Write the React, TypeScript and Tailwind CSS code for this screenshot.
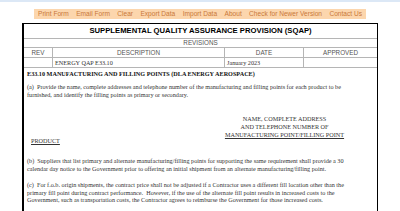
const menu = ['Print Form', 'Email Form', 'Clear', 'Export Data', 'Import Data', 'About', 'Check for Newer Version', 'Contact Us']

const serif = "font-['Liberation_Serif',serif]"

export default function App() {
  return (
    <div className="w-[400px] h-[211px] overflow-hidden bg-white font-['Liberation_Sans',Arial,sans-serif]">
      <div className="h-[2px] bg-[#dce8f6]" />
      <div className="ml-[34px] mt-[7px] w-[332px] h-[10px] bg-[#fcd6ad] flex items-center gap-[7.4px] px-[4px] text-[6.6px] text-[#c9783a] leading-none whitespace-nowrap">
        {menu.map((m) => (
          <span key={m}>{m}</span>
        ))}
      </div>
      <div className="ml-[22px] mt-[4px] w-[356px] h-[200px] border-l-2 border-r border-t border-black">
        <div className="h-[15px] flex items-center justify-center font-bold text-[7.7px] text-black border-b border-[#b5b5b5]">
          SUPPLEMENTAL QUALITY ASSURANCE PROVISION (SQAP)
        </div>
        <div className="h-[9px] flex items-center justify-center text-[6.3px] text-[#555] border-b border-[#b5b5b5]">
          REVISIONS
        </div>
        <div className="grid grid-cols-[29px_172px_79px_1fr] text-[6.3px] text-[#555] border-b border-[#b5b5b5]">
          <div className="h-[9px] flex items-center justify-center border-r border-[#b5b5b5]">REV</div>
          <div className="h-[9px] flex items-center justify-center border-r border-[#b5b5b5]">DESCRIPTION</div>
          <div className="h-[9px] flex items-center justify-center border-r border-[#b5b5b5]">DATE</div>
          <div className="h-[9px] flex items-center justify-center">APPROVED</div>
        </div>
        <div className={`grid grid-cols-[29px_172px_79px_1fr] text-[6.2px] text-[#333] border-b border-[#b5b5b5] ${serif}`}>
          <div className="h-[9px] border-r border-[#b5b5b5]" />
          <div className="h-[9px] flex items-center px-[2px] border-r border-[#b5b5b5]">ENERGY QAP E33.10</div>
          <div className="h-[9px] flex items-center px-[2px] border-r border-[#b5b5b5]">January 2023</div>
          <div className="h-[9px]" />
        </div>
        <div className={`px-[3px] pt-[2px] text-[6.2px] leading-[7.8px] text-[#333] ${serif}`}>
          <p className="font-bold text-[#111]">E33.10 MANUFACTURING AND FILLING POINTS (DLA ENERGY AEROSPACE)</p>
          <p className="mt-[5px] whitespace-pre">
            {'(a)  Provide the name, complete addresses and telephone number of the manufacturing and filling points for each product to be\nfurnished, and identify the filling points as primary or secondary.'}
          </p>
          <div className="flex items-start mt-[17px]">
            <div className="w-[190px] pl-[4px] pt-[22px]">
              <span className="underline">PRODUCT</span>
            </div>
            <div className="flex-1 text-center pr-[22px]">
              <p>NAME, COMPLETE ADDRESS</p>
              <p>AND TELEPHONE NUMBER OF</p>
              <p className="underline">MANUFACTURING POINT/FILLING POINT</p>
            </div>
          </div>
          <p className="mt-[12px] whitespace-pre">
            {'(b)  Suppliers that list primary and alternate manufacturing/filling points for supporting the same requirement shall provide a 30\ncalendar day notice to the Government prior to offering an initial shipment from an alternate manufacturing/filling point.'}
          </p>
          <p className="mt-[8px] whitespace-pre">
            {'(c)  For f.o.b. origin shipments, the contract price shall not be adjusted if a Contractor uses a different fill location other than the\nprimary fill point during contract performance.  However, if the use of the alternate fill point results in increased costs to the\nGovernment, such as transportation costs, the Contractor agrees to reimburse the Government for those increased costs.'}
          </p>
        </div>
      </div>
    </div>
  )
}
